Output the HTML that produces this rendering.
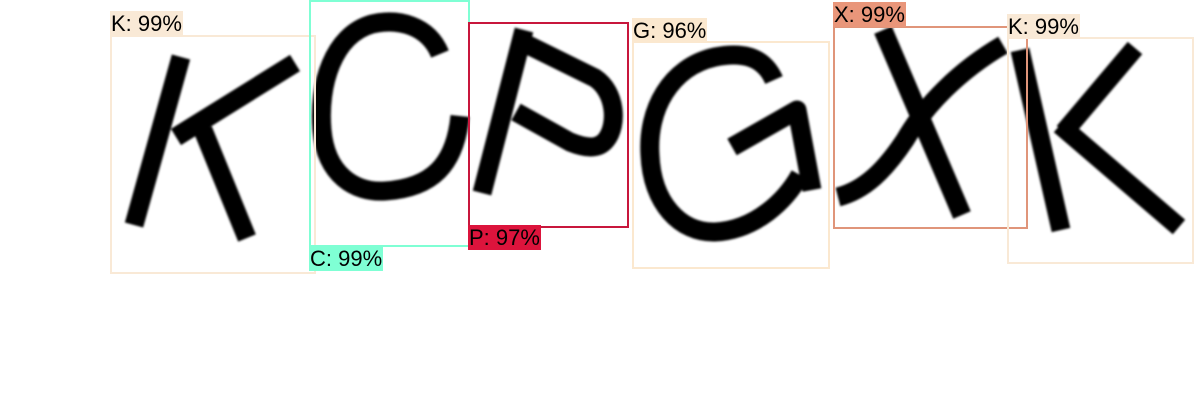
<!DOCTYPE html>
<html><head><style>
body{margin:0;background:#fff;width:1200px;height:420px;overflow:hidden;position:relative;font-family:"Liberation Sans",sans-serif}
.b{position:absolute;box-sizing:border-box;border:2px solid}
.l{position:absolute;font-size:22px;line-height:25px;color:#000;padding:0 1px;white-space:nowrap}
svg{position:absolute;left:0;top:0}
</style></head><body>
<svg width="1200" height="420" viewBox="0 0 1200 420">
<defs><filter id="f"><feGaussianBlur stdDeviation="1"/></filter></defs>
<g fill="none" stroke="#000" stroke-width="19" stroke-linecap="butt" stroke-linejoin="round" filter="url(#f)">
<path d="M181,57 L134,225 M295,63 L176,137 M203,130 L247,238"/>
<path d="M440,54 C428,25 398,18 372,24 C333,35 318,85 322,130 C326,175 355,193 385,191 C432,188 455,165 460,116"/>
<path d="M524,30 L482,193 M522,42 L595,78 C616,92 618,125 606,140 C598,150 585,148 570,142 L516,112"/>
<path d="M774,80 C763,55 740,52 715,57 C670,67 647,110 650,155 C652,203 680,233 715,232 C756,230 786,200 800,175 M732,147 L797,110 L812,190"/>
<path d="M883,30 L962,215 M1003,45 C960,70 925,105 905,140 C885,170 865,190 838,197"/>
<path d="M1020,50 L1061,230 M1135,48 L1064,132 M1060,125 L1179,227"/>
</g></svg>
<div class="b" style="left:110px;top:35px;width:206px;height:239px;border-color:#f9e9d6"></div>
<div class="l" style="left:110px;top:11px;background:#f9e9d6">K: 99%</div>
<div class="b" style="left:309px;top:0;width:161px;height:247px;border-color:#7fffd4"></div>
<div class="l" style="left:309px;top:246px;background:#7fffd4">C: 99%</div>
<div class="b" style="left:468px;top:22px;width:161px;height:206px;border-color:#c8173c"></div>
<div class="l" style="left:468px;top:225px;background:#dc143c">P: 97%</div>
<div class="b" style="left:632px;top:41px;width:198px;height:228px;border-color:#fbe8cf"></div>
<div class="l" style="left:632px;top:18px;background:#fbe8cf">G: 96%</div>
<div class="b" style="left:833px;top:26px;width:195px;height:203px;border-color:#e0957a"></div>
<div class="l" style="left:833px;top:2px;background:#e9967a">X: 99%</div>
<div class="b" style="left:1007px;top:37px;width:187px;height:227px;border-color:#f9e9d6"></div>
<div class="l" style="left:1007px;top:14px;background:#f9e9d6">K: 99%</div>
</body></html>
